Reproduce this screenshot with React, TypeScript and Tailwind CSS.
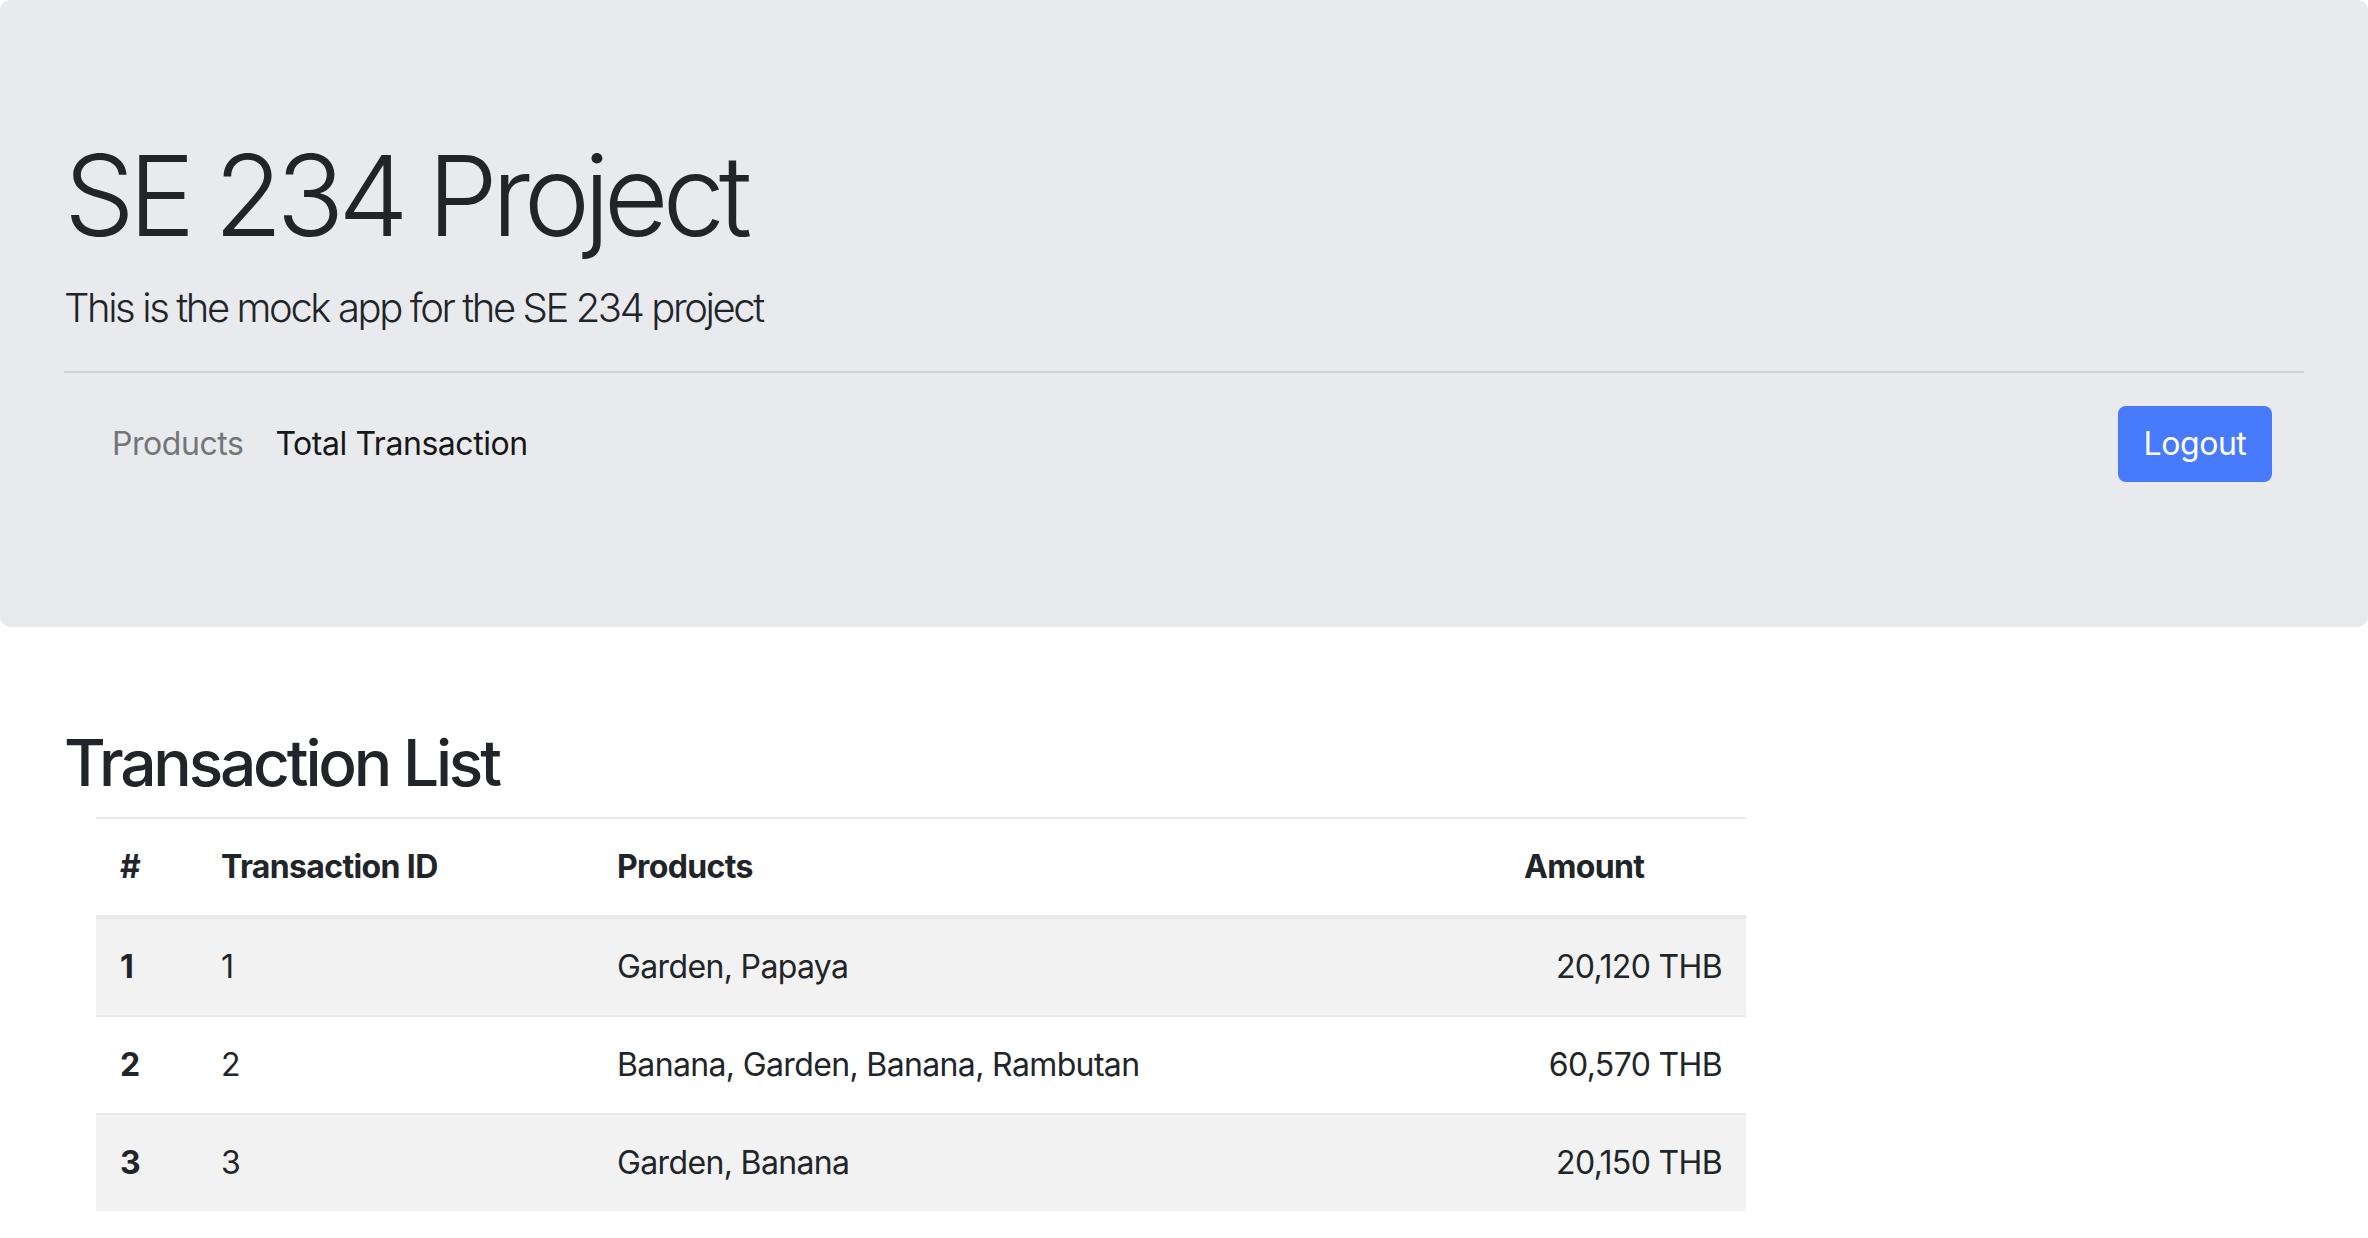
import React from "react"

const rows = [
  { no: 1, id: 1, products: "Garden, Papaya", amount: "20,120 THB" },
  { no: 2, id: 2, products: "Banana, Garden, Banana, Rambutan", amount: "60,570 THB" },
  { no: 3, id: 3, products: "Garden, Banana", amount: "20,150 THB" },
]

export default function App() {
  return (
    <div className="min-h-screen bg-white font-['Inter',sans-serif] text-[#212529]">
      {/* Jumbotron */}
      <div className="rounded-[10px] bg-[#e9eaee] px-16 pt-[128px] pb-[127px]">
        <h1 className="mb-4 text-[112px] font-light leading-[1.2] tracking-[-0.056em]">SE 234 Project</h1>
        <p className="text-[40px] font-light leading-[1.5] tracking-[-0.06em]">
          This is the mock app for the SE 234 project
        </p>
        <hr className="mt-[33px] mb-[15px] border-0 border-t-2 border-[#d2d3d6]" />
        <nav className="flex items-center justify-between px-8 py-4 tracking-[-0.028em]">
          <div className="flex">
            <a className="px-4 py-4 text-[32px] leading-[48px] text-[#747577]">Products</a>
            <a className="px-4 py-4 text-[32px] leading-[48px] text-[#171717]">Total Transaction</a>
          </div>
          <button className="flex h-[76px] w-[154px] items-center justify-center rounded-[8px] bg-[#477bfb] text-[32px] text-white">
            Logout
          </button>
        </nav>
      </div>

      {/* Transactions */}
      <div className="px-16 pt-[98px]">
        <h2 className="mb-[15px] text-[64px] font-medium leading-[1.2] tracking-[-0.05em]">Transaction List</h2>
        <table className="ml-8 w-[1650px] table-fixed border-collapse text-[32px] leading-[48px] tracking-[-0.02em]">
          <colgroup>
            <col className="w-[101px]" />
            <col className="w-[396px]" />
            <col className="w-[907px]" />
            <col className="w-[246px]" />
          </colgroup>
          <thead>
            <tr className="border-t-2 border-b-4 border-[#e7e8ec]">
              <th className="p-6 text-left font-bold">#</th>
              <th className="p-6 text-left font-bold">Transaction ID</th>
              <th className="p-6 text-left font-bold">Products</th>
              <th className="p-6 text-left font-bold">Amount</th>
            </tr>
          </thead>
          <tbody>
            {rows.map((r, i) => (
              <tr
                key={r.no}
                className={`border-t-2 border-[#e7e8ec] ${i % 2 === 0 ? "bg-[#f2f2f2]" : "bg-white"}`}
              >
                <th className="p-6 text-left font-bold">{r.no}</th>
                <td className="p-6">{r.id}</td>
                <td className="p-6">{r.products}</td>
                <td className="p-6 text-right">{r.amount}</td>
              </tr>
            ))}
          </tbody>
        </table>
      </div>
    </div>
  )
}
